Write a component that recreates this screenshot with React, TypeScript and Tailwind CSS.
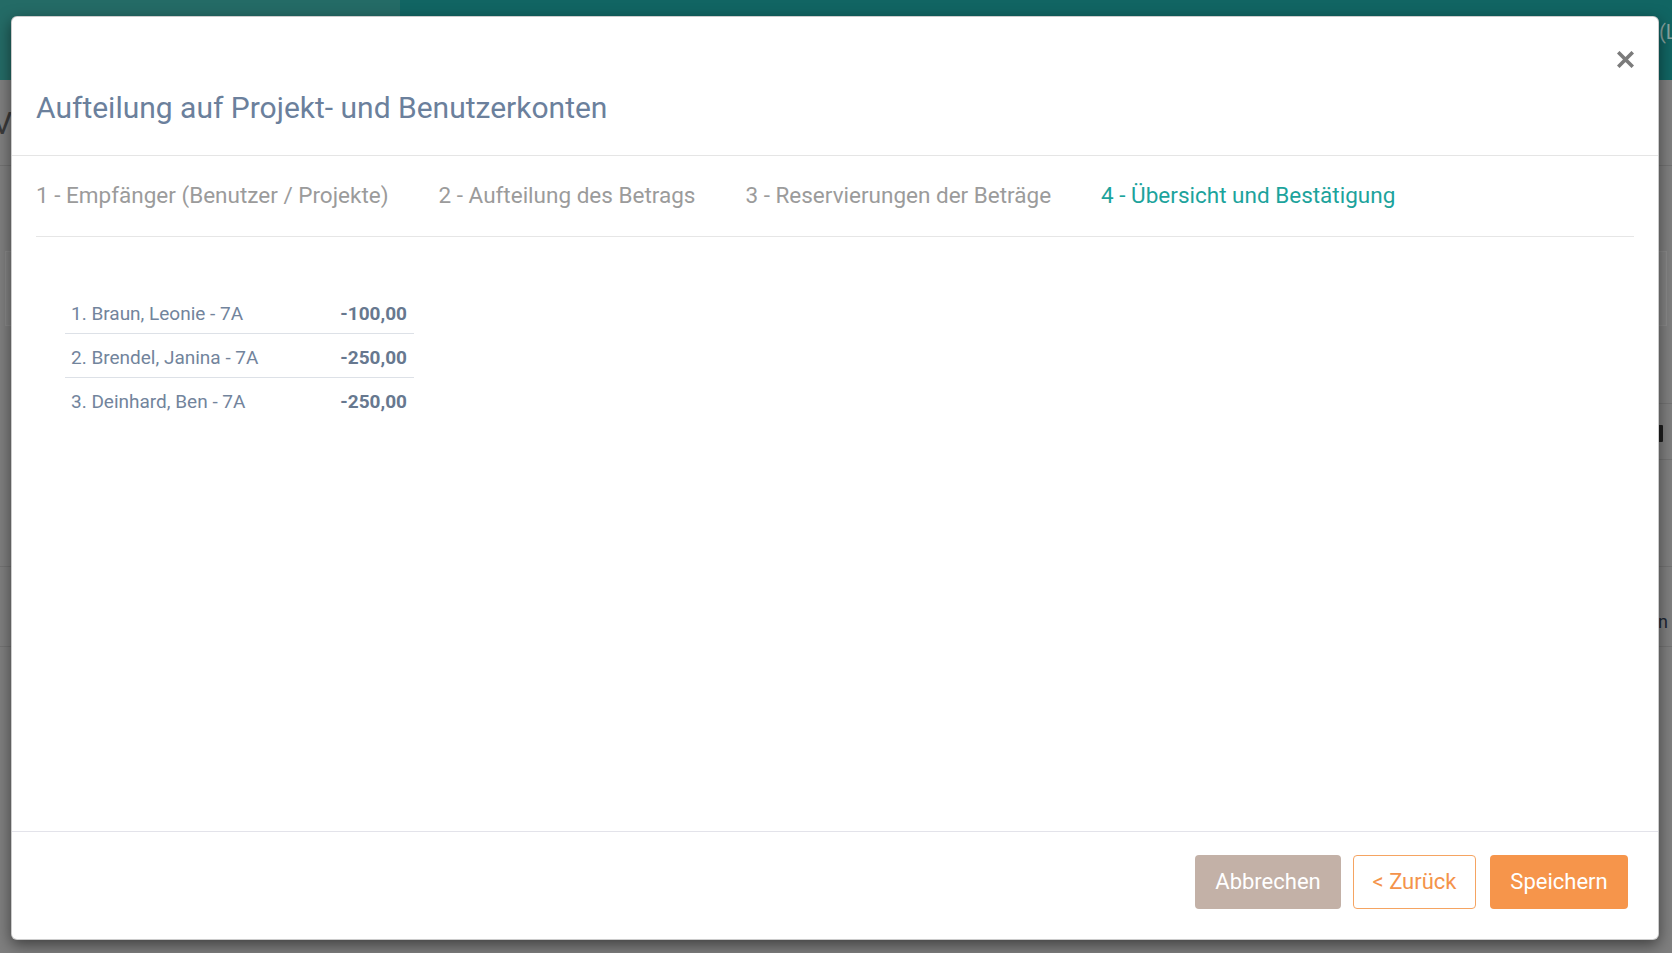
import React from 'react';

type Row = { name: string; amount: string };

const tabs = [
  { label: '1 - Empfänger (Benutzer / Projekte)', active: false },
  { label: '2 - Aufteilung des Betrags', active: false },
  { label: '3 - Reservierungen der Beträge', active: false },
  { label: '4 - Übersicht und Bestätigung', active: true },
];

const rows: Row[] = [
  { name: '1. Braun, Leonie - 7A', amount: '-100,00' },
  { name: '2. Brendel, Janina - 7A', amount: '-250,00' },
  { name: '3. Deinhard, Ben - 7A', amount: '-250,00' },
];

const CloseIcon = () => (
  <svg width="17" height="17" viewBox="0 0 17 17" aria-hidden="true">
    <path d="M2.5 2.5 L14.5 14.5 M14.5 2.5 L2.5 14.5" stroke="#7b7b7b" strokeWidth="3.6" strokeLinecap="square" />
  </svg>
);

// page behind the backdrop (already darkened colours)
const BackPage = () => (
  <div className="flex flex-col h-full">
    <div className="flex h-[80px] shrink-0">
      <div className="w-[400px] shrink-0 bg-[#246b66]" />
      <div className="flex-1 min-w-0 overflow-hidden bg-[#116563] flex items-start pt-[20px]">
        <span className="ml-[1259px] shrink-0 whitespace-nowrap text-[20px] leading-[24px] text-[#8aa5a2]">(Logout)</span>
      </div>
    </div>
    <div className="h-[86px] shrink-0 flex items-center border-b border-[#727272]">
      <span className="-ml-[8px] text-[32px] text-[#3b3b3b]">V</span>
    </div>
    <div className="h-[85px] shrink-0" />
    <div className="h-[75px] shrink-0 mx-[5px] border border-[#8a8a8a] bg-[#838383]" />
    <div className="h-[78px] shrink-0 ml-[40px] border-b border-[#737373]" />
    <div className="h-[56px] shrink-0 ml-[40px] border-b border-[#737373] flex items-center justify-end pr-[9px] pt-[3px]">
      <div className="w-[12px] h-[17px] bg-[#1e1e1e] rounded-[1px]" />
    </div>
    <div className="h-[107px] shrink-0 border-b border-[#737373]" />
    <div className="h-[80px] shrink-0 border-b border-[#737373] flex items-end justify-end pr-[4px] pb-[14px]">
      <span className="text-[18px] leading-[20px] text-[#1d2633]">Buchen</span>
    </div>
  </div>
);

export default function App() {
  return (
    <div className="relative w-[1672px] h-[953px] overflow-hidden bg-[#7f7f7f] font-[family-name:Roboto,sans-serif]">
      <BackPage />

      {/* Modal */}
      <div className="absolute left-[11px] top-[16px] w-[1648px] h-[924px] bg-white rounded-[6px] border border-black/20 shadow-[0_5px_15px_rgba(0,0,0,0.5)] flex flex-col">
        {/* Header */}
        <div className="h-[139px] shrink-0 border-b border-[#e5e5e5] px-6 pt-[29px] flex flex-col">
          <div className="h-[26px] flex justify-end items-center">
            <button className="flex items-center justify-center" aria-label="Schließen">
              <CloseIcon />
            </button>
          </div>
          <h4 className="mt-[18px] text-[30px] leading-[36px] text-[#6b809c] font-normal">
            Aufteilung auf Projekt- und Benutzerkonten
          </h4>
        </div>

        {/* Body */}
        <div className="flex-1 px-6">
          <div className="flex gap-[50px] pt-[24px] pb-[26px] border-b border-[#e6e6e6]">
            {tabs.map((t) => (
              <span
                key={t.label}
                className={`text-[22.5px] leading-[30px] whitespace-nowrap ${t.active ? 'text-[#1ca39c]' : 'text-[#9b9b9b]'}`}
              >
                {t.label}
              </span>
            ))}
          </div>

          <div className="mt-[53px] ml-[29px] w-[349px]">
            {rows.map((r, i) => (
              <div
                key={r.name}
                className={`h-[44px] flex items-center justify-between pl-[6px] pr-[7px] pt-[5px] text-[19px] ${i < rows.length - 1 ? 'border-b border-[#dde1e7]' : ''}`}
              >
                <span className="text-[#72849c]">{r.name}</span>
                <span className="font-bold text-[#67788f]">{r.amount}</span>
              </div>
            ))}
          </div>
        </div>

        {/* Footer */}
        <div className="h-[108px] shrink-0 border-t border-[#e3e3ea] pt-[23px] pr-[30px] flex justify-end items-start">
          <button className="w-[146px] h-[54px] rounded-[4px] bg-[#c3b1a7] text-white text-[22px] pb-[2px]">Abbrechen</button>
          <button className="ml-[12px] w-[123px] h-[54px] rounded-[4px] border border-[#f5a462] bg-white text-[#f4934b] text-[22px] pb-[2px]">&lt; Zurück</button>
          <button className="ml-[14px] w-[138px] h-[54px] rounded-[4px] bg-[#f6954b] text-white text-[22px] pb-[2px]">Speichern</button>
        </div>
      </div>
    </div>
  );
}
